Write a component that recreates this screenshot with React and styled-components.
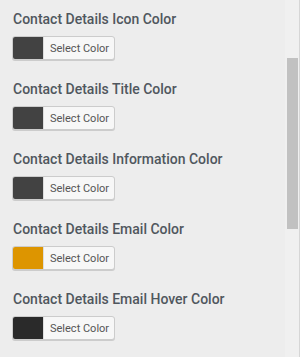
import styled, { createGlobalStyle } from "styled-components";

const GlobalStyle = createGlobalStyle`
  html, body {
    margin: 0;
    padding: 0;
    background: #ededed;
  }
`

const StyledPage = styled.div`
  display: flex;
  flex-direction: row;
  width: 300px;
  height: 357px;
  overflow: hidden;
  background: #ededed;
  font-family: Roboto, "Liberation Sans", sans-serif;
`

const StyledList = styled.div`
  flex: 1;
  display: flex;
  flex-direction: column;
  gap: 19px;
  padding: 9px 0 0 13px;
`

const StyledGroup = styled.div`
  display: flex;
  flex-direction: column;
  align-items: flex-start;
  gap: 7px;
`

const StyledLabel = styled.p`
  margin: 0;
  font-size: 14px;
  line-height: 20px;
  font-weight: 500;
  color: #50575e;
  white-space: nowrap;
`

const StyledColorButton = styled.button`
  display: flex;
  flex-direction: row;
  align-items: stretch;
  box-sizing: border-box;
  height: 24px;
  margin: 0 0 0 -1px;
  padding: 0;
  background: #f7f7f7;
  border: 1px solid #cccccc;
  border-radius: 3px;
  box-shadow: 0 1px 0 #cccccc;
  overflow: hidden;
  cursor: pointer;
`

const StyledSwatch = styled.span`
  display: block;
  width: 30px;
  background: ${props => props.color};
`

const StyledButtonText = styled.span`
  display: flex;
  align-items: center;
  padding: 0 5px 0 6px;
  border-left: 1px solid #dddddd;
  font-family: Roboto, "Liberation Sans", sans-serif;
  font-size: 11px;
  color: #555555;
`

const StyledScrollTrack = styled.div`
  width: 15px;
  height: 100%;
  background: #f0f0f0;
  border-right: 1px solid #d6d6d6;
  display: flex;
  justify-content: center;
  padding-top: 58px;
  box-sizing: border-box;
`

const StyledScrollThumb = styled.div`
  width: 11px;
  height: 171px;
  background: #c1c1c1;
`

const settings = [
    { label: "Contact Details Icon Color", color: "#424242" },
    { label: "Contact Details Title Color", color: "#424242" },
    { label: "Contact Details Information Color", color: "#424242" },
    { label: "Contact Details Email Color", color: "#dd9500" },
    { label: "Contact Details Email Hover Color", color: "#2a2a2a" },
]

export default function App() {
    return (
        <StyledPage>
            <GlobalStyle />
            <StyledList>
                {settings.map(item => (
                    <StyledGroup key={item.label}>
                        <StyledLabel>{item.label}</StyledLabel>
                        <StyledColorButton type="button">
                            <StyledSwatch color={item.color} />
                            <StyledButtonText>Select Color</StyledButtonText>
                        </StyledColorButton>
                    </StyledGroup>
                ))}
            </StyledList>
            <StyledScrollTrack>
                <StyledScrollThumb />
            </StyledScrollTrack>
        </StyledPage>
    )
}
